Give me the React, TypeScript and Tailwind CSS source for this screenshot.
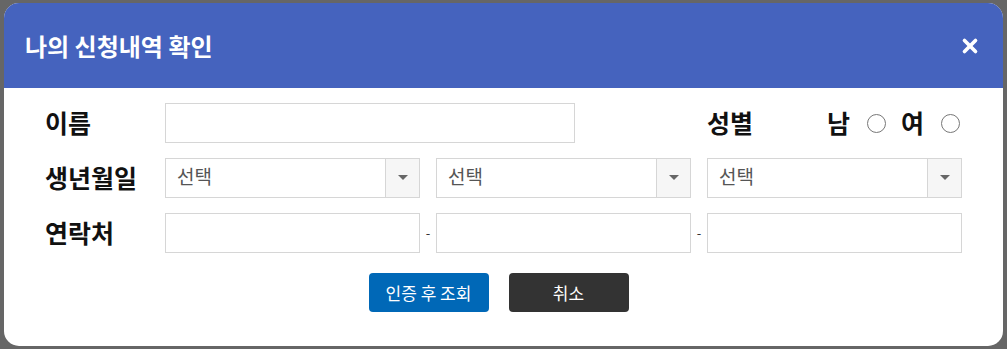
import { X } from 'lucide-react'

function Select() {
  return (
    <div className="flex h-10 w-[255px] border border-[#d6d6d6] bg-white">
      <div className="flex flex-1 items-center px-[11px] pb-[3px] text-[19px] text-[#555]">선택</div>
      <div className="flex w-[34px] items-center justify-center border-l border-[#d6d6d6] bg-[#f6f6f6]">
        <svg width="10" height="6" viewBox="0 0 10 6">
          <path d="M0 0h10L5 5z" fill="#666" />
        </svg>
      </div>
    </div>
  )
}

function Radio() {
  return <span className="block h-[19px] w-[19px] rounded-full border border-[#777] bg-white" />
}

export default function App() {
  const font = { fontFamily: '"Noto Sans CJK KR", "Noto Sans", sans-serif' }
  const label = 'text-[25px] font-bold text-[#111]'
  return (
    <div className="h-[349px] w-[1007px] bg-[#666666] pt-[3px] pl-[4px]" style={font}>
      <div className="h-[343px] w-[999px] overflow-hidden rounded-[15px] bg-white">
        {/* header */}
        <div className="flex h-[85px] items-center justify-between bg-[#4563be] pl-[21px] pr-[22px]">
          <h2 className="text-[24px] font-bold text-white">나의 신청내역 확인</h2>
          <X className="h-[22px] w-[22px] text-white" strokeWidth={4} />
        </div>

        {/* body */}
        <div className="flex flex-col gap-[15px] pt-[15px] pl-[41px]">
          <div className="flex h-10 items-center">
            <span className={`w-[120px] ${label}`}>이름</span>
            <div className="h-10 w-[410px] border border-[#d6d6d6]" />
            <span className={`ml-[132px] w-[120px] ${label}`}>성별</span>
            <span className={label}>남</span>
            <span className="ml-[17px]"><Radio /></span>
            <span className={`ml-[15px] ${label}`}>여</span>
            <span className="ml-[17px]"><Radio /></span>
          </div>

          <div className="flex h-10 items-center">
            <span className={`w-[120px] ${label}`}>생년월일</span>
            <div className="flex gap-[16px]">
              <Select />
              <Select />
              <Select />
            </div>
          </div>

          <div className="flex h-10 items-center">
            <span className={`w-[120px] ${label}`}>연락처</span>
            <div className="h-10 w-[255px] border border-[#d6d6d6]" />
            <span className="w-[16px] text-center text-[13px] text-[#333]">-</span>
            <div className="h-10 w-[255px] border border-[#d6d6d6]" />
            <span className="w-[16px] text-center text-[13px] text-[#333]">-</span>
            <div className="h-10 w-[255px] border border-[#d6d6d6]" />
          </div>
        </div>

        <div className="mt-[20px] flex justify-center gap-[20px] pr-[10px]">
          <button className="h-[39px] w-[120px] rounded-[4px] bg-[#0068b7] text-[17px] text-white">인증 후 조회</button>
          <button className="h-[39px] w-[120px] rounded-[4px] bg-[#333333] text-[17px] text-white">취소</button>
        </div>
      </div>
    </div>
  )
}
